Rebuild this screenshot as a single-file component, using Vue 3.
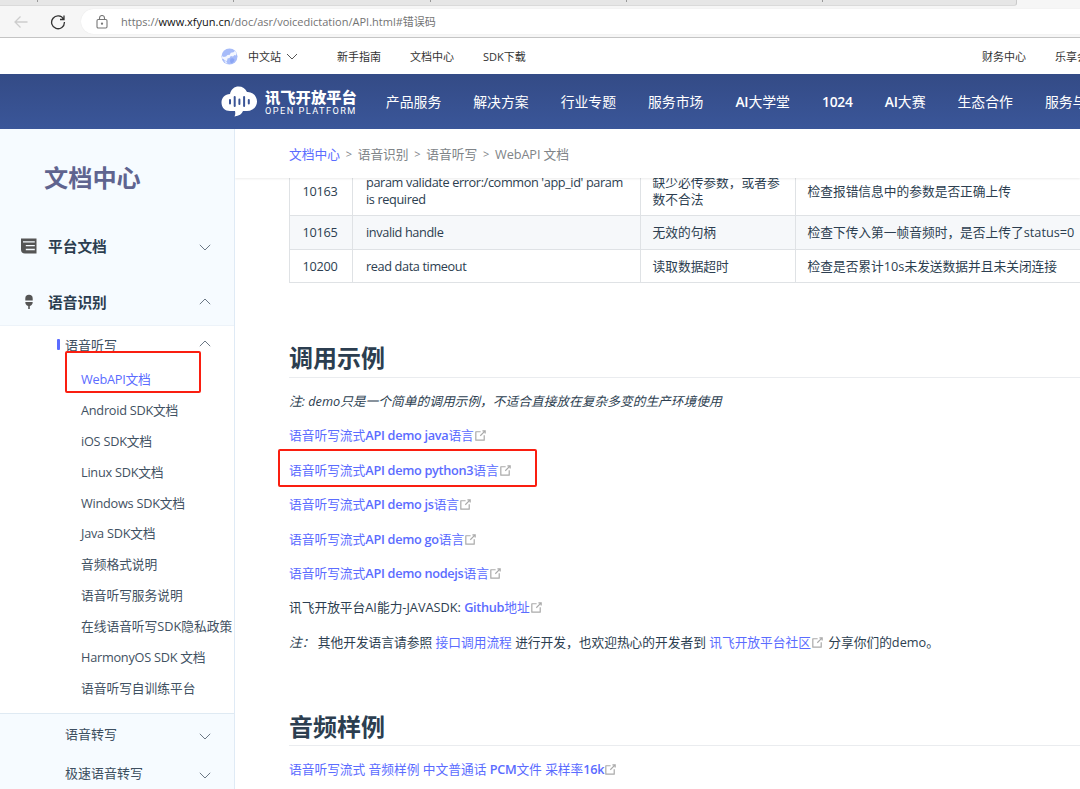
<template>
  <div class="page">
    <div class="browser">
      <div class="tab-strip">
        <i v-for="n in 5" :key="n" class="tab-sep"></i>
      </div>
      <div class="toolbar">
        <svg class="back" width="14" height="14" viewBox="0 0 14 14"><path d="M13.5 7H1M6.5 1.5L1 7l5.500 5.500" /></svg>
        <svg class="reload" width="16" height="16" viewBox="0 0 16 16">
          <path d="M13.600 5.200A6.400 6.400 0 1 0 14.400 8M14 1.500v4h-4" />
        </svg>
        <div class="address">
          <svg class="lock" width="12" height="14" viewBox="0 0 12 14">
            <rect x="1" y="4.500" width="10" height="8.500" rx="1.200" />
            <path d="M3.500 4.500V3a2.500 2.500 0 0 1 5 0v1.500" />
            <circle cx="6" cy="8.700" r=".6" />
          </svg>
          <span class="url">https://<b>www.xfyun.cn</b>/doc/asr/voicedictation/API.html#错误码</span>
        </div>
      </div>
    </div>

    <div class="topbar">
      <svg class="globe" width="17" height="17" viewBox="0 0 17 17">
        <circle cx="8.500" cy="8.500" r="8" fill="#a6bbf9" />
        <path d="M9.800 4.800l2.700-.5L14 2.800l1.600 2.400-.6 2.300-1.500-.5-1.500 1.500-2.200-.5-1.300 2-2 .5-.5 2.500-2-.5L2.500 11 1 10.500 1.200 8l1.500 1 2.300-.5L6.500 7l2.300-.3z" fill="#f4f7ff" />
        <path d="M9.500 10.500l2.500-.3 1.500 1.300-1 2.500-2.500 1.500-1-2.500z" fill="#8ba5f4" />
        <path d="M3 12.500l2.500 1 1 2.300-2-.8z" fill="#e6edff" />
      </svg>
      <span class="site">中文站</span>
      <svg class="site-arrow" width="12" height="7" viewBox="0 0 12 7"><path d="M1 1l5 5 5-5" /></svg>
      <span v-for="item in topLinks" :key="item" class="top-link">{{ item }}</span>
      <span class="top-link finance">财务中心</span>
      <span class="top-link last">乐享会员</span>
    </div>

    <div class="navbar">
      <svg class="logo" width="37" height="31" viewBox="0 0 37 31">
        <path d="M9 8C10 3 13.500.5 17.500.5c4 0 7 2 8.500 5.500 5.500-.5 10 4 10 9.500S31.500 25 26 25h-4c-1 3-4 5-8.500 5.500.8-1.500 1-3.500.5-5.500H9C4 25 .5 21.500.5 16.500S4 8.500 9 8z" fill="#fff" />
        <path d="M9 14v3.500M13.700 11v9M18.400 13.500v4.500M23.100 11v9M27.800 14v3.500" stroke="#3a5496" stroke-width="2" stroke-linecap="round" fill="none" />
      </svg>
      <div class="brand">
        <span class="brand-cn">讯飞开放平台</span>
        <span class="brand-en">OPEN PLATFORM</span>
      </div>
      <span v-for="item in navItems" :key="item.latin + item.text" class="nav-item"><b v-if="item.latin">{{ item.latin }}</b>{{ item.text }}</span>
    </div>

    <div class="main">
      <aside class="sidebar">
        <div class="side-title">文档中心</div>
        <div class="group">
          <svg class="group-icon" width="16" height="16" viewBox="0 0 16 16">
            <path d="M0 .5h15.500V15.500H4A4 4 0 0 1 0 11.500z" fill="#555" />
            <path d="M2 3.900h11.800M4.800 7.700h9M4.800 11.500h9" stroke="#f6fbff" stroke-width="1.300" />
          </svg>
          <span>平台文档</span>
          <svg class="arrow down" viewBox="0 0 12 7"><path d="M.8.8L6 6l5.200-5.200" /></svg>
        </div>
        <div class="group second">
          <svg class="group-icon" width="16" height="16" viewBox="0 0 16 16">
            <path d="M4.300 6.500V4.500a3.700 3.700 0 0 1 7.400 0v2zM4.300 8h7.400c0 2-1 3.600-2.900 4v3H7.200V12C5.300 11.600 4.300 10 4.300 8z" fill="#555" />
          </svg>
          <span>语音识别</span>
          <svg class="arrow" viewBox="0 0 12 7"><path d="M.8 6.200L6 1l5.200 5.200" /></svg>
        </div>
        <div class="open-panel">
          <div class="sub current">
            <span>语音听写</span>
            <svg class="arrow" viewBox="0 0 12 7"><path d="M.8 6.200L6 1l5.200 5.200" /></svg>
          </div>
          <div
            v-for="(doc, i) in docs"
            :key="doc"
            class="doc"
            :class="{ active: i === 0, latin: /^[A-Za-z]/.test(doc) }"
          >
            {{ doc }}
          </div>
          <div class="mark mark-side"></div>
        </div>
        <div v-for="item in moreSubs" :key="item" class="sub">
          <span>{{ item }}</span>
          <svg class="arrow down" viewBox="0 0 12 7"><path d="M.8.8L6 6l5.200-5.200" /></svg>
        </div>
      </aside>

      <section class="content">
        <div class="crumbs">
          <a>文档中心</a><i>&gt;</i><span>语音识别</span><i>&gt;</i><span>语音听写</span><i>&gt;</i><span class="crumb-last">WebAPI 文档</span>
        </div>
        <div class="article">
          <table>
            <colgroup><col class="c1"><col class="c2"><col class="c3"><col class="c4"></colgroup>
            <tbody>
              <tr v-for="row in errors" :key="row[0]">
                <td v-for="(cell, i) in row" :key="i">{{ cell }}</td>
              </tr>
            </tbody>
          </table>
          <h2>调用示例</h2>
          <p class="tip"><em>注: demo只是一个简单的调用示例，不适合直接放在复杂多变的生产环境使用</em></p>
          <p v-for="lang in langs" :key="lang" class="demo">
            <a>语音听写流式<b>API demo {{ lang }}</b>语言</a><svg class="ext" viewBox="0 0 100 100"><path :d="extPath" /><path :d="extArrow" /></svg>
            <span v-if="lang === 'python3'" class="mark mark-demo"></span>
          </p>
          <p><span class="java">讯飞开放平台AI能力-JAVASDK: </span><a><b>Github</b>地址</a><svg class="ext" viewBox="0 0 100 100"><path :d="extPath" /><path :d="extArrow" /></svg></p>
          <p><em>注：</em> 其他开发语言请参照 <a>接口调用流程</a> 进行开发，也欢迎热心的开发者到 <a>讯飞开放平台社区</a><svg class="ext" viewBox="0 0 100 100"><path :d="extPath" /><path :d="extArrow" /></svg> 分享你们的demo。</p>
          <h2 class="audio">音频样例</h2>
          <p><a>语音听写流式 音频样例 中文普通话 <b>PCM</b>文件 采样率<b>16k</b></a><svg class="ext" viewBox="0 0 100 100"><path :d="extPath" /><path :d="extArrow" /></svg></p>
        </div>
      </section>
    </div>
  </div>
</template>

<script setup>
const topLinks = ['新手指南', '文档中心', 'SDK下载']

const navItems = [
  { latin: '', text: '产品服务' },
  { latin: '', text: '解决方案' },
  { latin: '', text: '行业专题' },
  { latin: '', text: '服务市场' },
  { latin: 'AI', text: '大学堂' },
  { latin: '1024', text: '' },
  { latin: 'AI', text: '大赛' },
  { latin: '', text: '生态合作' },
  { latin: '', text: '服务与支持' },
]

const docs = [
  'WebAPI文档',
  'Android SDK文档',
  'iOS SDK文档',
  'Linux SDK文档',
  'Windows SDK文档',
  'Java SDK文档',
  '音频格式说明',
  '语音听写服务说明',
  '在线语音听写SDK隐私政策',
  'HarmonyOS SDK 文档',
  '语音听写自训练平台',
]

const moreSubs = ['语音转写', '极速语音转写']

const errors = [
  ['10163', "param validate error:/common 'app_id' param is required", '缺少必传参数，或者参数不合法', '检查报错信息中的参数是否正确上传'],
  ['10165', 'invalid handle', '无效的句柄', '检查下传入第一帧音频时，是否上传了status=0'],
  ['10200', 'read data timeout', '读取数据超时', '检查是否累计10s未发送数据并且未关闭连接'],
]

const langs = ['java', 'python3', 'js', 'go', 'nodejs']

// 外链图标
const extPath = 'M18.800 85.100h56c2.200 0 4-1.800 4-4v-32h-8v28h-48v-48h28v-8h-32c-2.200 0-4 1.800-4 4v56c0 2.200 1.800 4 4 4z'
const extArrow = 'M45.700 48.700L51.300 54.300 77.200 28.500V37.200H85.200V14.900H62.800V22.900H71.500z'
</script>

<style>
body {
  background: #fff;
  overflow: hidden;
}
</style>

<style scoped>
.page {
  width: 1080px;
  height: 789px;
  overflow: hidden;
  display: flex;
  flex-direction: column;
  font-family: "Open Sans", "Noto Sans CJK SC", sans-serif;
  font-size: 12.72px;
  color: #2c3e50;
  white-space: nowrap;
}

svg {
  flex-shrink: 0;
}

.browser {
  height: 38px;
  box-sizing: border-box;
  background: #f6f6f6;
  border-bottom: 1px solid #c4c4c4;
}

.tab-strip {
  width: 1017px;
  height: 6px;
  box-sizing: border-box;
  background: #e6e6e6;
  border-bottom: 1px solid #dadada;
  border-right: 1px solid #cacaca;
  border-radius: 0 0 3px 0;
  display: flex;
  padding-left: 37px;
  gap: 195.3px;
}

.tab-sep {
  width: 1px;
  height: 2px;
  background: #999;
}

.toolbar {
  height: 31px;
  display: flex;
  align-items: center;
  padding-left: 14px;
}

.toolbar svg {
  fill: none;
  stroke: #333;
  stroke-width: 1.3;
}

.toolbar .back {
  stroke: #cdcdcd;
}

.reload {
  margin-left: 22px;
}

.address {
  flex: 1;
  height: 25px;
  margin-left: 15px;
  background: #fff;
  border-radius: 13px 0 0 13px;
  box-shadow: 0 0 1px #ddd;
  display: flex;
  align-items: center;
  padding-left: 15px;
}

.toolbar .lock {
  stroke: #777;
  stroke-width: 1.1;
}

.url {
  margin-left: 13px;
  margin-top: -1px;
  font-size: 11.03px;
  color: #737373;
}

.url b {
  font-weight: 400;
  color: #111;
}

.topbar {
  height: 36px;
  box-sizing: border-box;
  display: flex;
  align-items: center;
  padding-left: 221px;
  font-size: 11px;
  color: #333;
}

.site {
  margin-left: 10px;
}

.site-arrow {
  margin-left: 5px;
  margin-right: 39px;
  fill: none;
  stroke: #555;
}

.top-link {
  margin-right: 29px;
}

.finance {
  margin-left: auto;
}

.last {
  width: 25px;
  margin-right: 0;
  overflow: hidden;
}

.navbar {
  height: 55px;
  flex-shrink: 0;
  display: flex;
  align-items: center;
  padding-left: 221px;
  background: linear-gradient(#344b86, #3a5699);
  color: #fff;
}

.brand {
  width: 92px;
  margin-left: 7px;
  margin-right: 29px;
  padding-top: 2px;
  display: flex;
  flex-direction: column;
}

.brand-cn {
  font-size: 15.3px;
  line-height: 16px;
  font-weight: 900;
}

.brand-en {
  font-family: "Roboto", sans-serif;
  font-size: 9.2px;
  line-height: 12px;
  letter-spacing: 1.45px;
}

.nav-item {
  font-size: 13.85px;
  line-height: 20px;
  margin-top: 1px;
  margin-right: 32px;
}

.nav-item b {
  letter-spacing: -0.2px;
}

.main {
  flex: 1;
  display: flex;
  min-height: 0;
}

.sidebar {
  width: 235px;
  box-sizing: border-box;
  flex-shrink: 0;
  background: #f6fbff;
  border-right: 1px solid #dfeaf5;
}

.side-title {
  height: 88px;
  padding: 4px 0 0 44px;
  line-height: 90px;
  font-size: 24.2px;
  font-weight: 700;
  color: #5f648f;
}

.group {
  height: 48px;
  box-sizing: border-box;
  display: flex;
  align-items: center;
  padding: 1px 23px 0 21px;
  font-size: 14.7px;
  font-weight: 700;
}

.group.second {
  height: 56px;
  padding-top: 9px;
}

.group span {
  margin-left: 11px;
}

.arrow {
  width: 12px;
  height: 7px;
  margin-left: auto;
  fill: none;
  stroke: #6b7885;
}

.arrow.down {
  margin-top: 4px;
}

.open-panel {
  position: relative;
  height: 389px;
  box-sizing: border-box;
  background: #fff;
  border-top: 1px solid #edf3f9;
  border-bottom: 1px solid #dfeaf3;
}

.sub {
  height: 39px;
  box-sizing: border-box;
  display: flex;
  align-items: center;
  padding: 0 23px 0 65px;
  font-size: 13px;
  color: #3d4f60;
}

.sub .arrow.down {
  margin-top: 6px;
}

.sub.current {
  height: 35px;
  margin-bottom: 3px;
  padding-top: 1px;
  padding-left: 66px;
}

.doc {
  height: 30.9px;
  line-height: 31.2px;
  padding-left: 81px;
  color: #3f5162;
}

.doc.latin {
  letter-spacing: -0.24px;
}

.doc.active {
  color: #5b6cff;
}

.mark {
  position: absolute;
  box-sizing: border-box;
  border: 2px solid #fa1e10;
  border-radius: 2px;
}

.mark-side {
  left: 65px;
  top: 25px;
  width: 136px;
  height: 42px;
}

.current::before {
  content: "";
  width: 3px;
  height: 11px;
  margin-left: -9px;
  margin-right: 5px;
  border-radius: 1px;
  background: #5b6cff;
}

.current .arrow {
  margin-top: -1px;
}

.content {
  flex: 1;
  min-width: 0;
  overflow: hidden;
}

.crumbs {
  position: relative;
  z-index: 1;
  height: 49px;
  display: flex;
  align-items: center;
  padding-left: 54px;
  background: #fff;
  box-shadow: 0 1px 2px rgba(0, 0, 0, 0.08);
  color: #808488;
}

.crumbs i {
  width: 17.8px;
  text-align: center;
  font-style: normal;
  font-size: 11px;
}

.crumb-last {
  letter-spacing: -0.1px;
}

a {
  color: #5b6cff;
}

b {
  font-weight: 600;
}

.article {
  width: 850px;
  margin: -13px 0 0 54px;
}

table {
  width: 850px;
  table-layout: fixed;
  border-collapse: collapse;
  white-space: normal;
}

.c1 {
  width: 63px;
}

.c2 {
  width: 287.500px;
}

.c3 {
  width: 155px;
}

td {
  padding: 8px 12px 7.2px;
  border: 1px solid #dfe2e5;
  line-height: 17.1px;
}

td:first-child {
  padding-left: 0;
  padding-right: 2px;
  text-align: center;
  letter-spacing: -0.3px;
}

td:nth-child(2) {
  padding-left: 13px;
  padding-right: 8px;
  letter-spacing: -0.38px;
}

tr:nth-child(2) {
  background: #f6f8fa;
}

h2 {
  height: 36px;
  margin: 58px 0 0;
  line-height: 33px;
  font-size: 24px;
  font-weight: 700;
  border-bottom: 1px solid #eaecef;
}

h2.audio {
  margin-top: 50px;
  line-height: 35px;
}

p {
  position: relative;
  height: 34.4px;
  line-height: 34.4px;
  margin: 0;
}

h2 + p {
  margin-top: 6px;
}

p b {
  letter-spacing: -0.3px;
}

.ext {
  width: 15px;
  height: 15px;
  margin-left: -1px;
  vertical-align: -3px;
  fill: #aaa;
}

.mark-demo {
  left: -11px;
  top: -4px;
  width: 259px;
  height: 38px;
}
</style>
